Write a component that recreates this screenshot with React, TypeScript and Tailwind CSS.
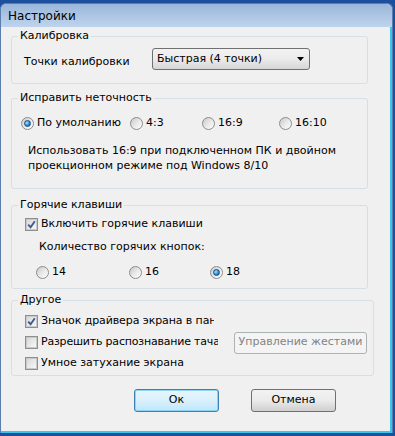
import React from 'react'

function Radio({ checked }: { checked?: boolean }) {
  return (
    <span className="flex h-[13px] w-[13px] shrink-0 items-center justify-center rounded-full border border-[#8c8c8c] bg-gradient-to-br from-[#c9c9c9] via-[#e8e8e8] to-[#ffffff]">
      {checked && (
        <span className="h-[7px] w-[7px] rounded-full border border-[#1b4f7e] bg-[radial-gradient(circle_at_35%_35%,#a6e3ff,#2a8fd6_55%,#0f4a85)]" />
      )}
    </span>
  )
}

function Check({ checked }: { checked?: boolean }) {
  return (
    <span className="flex h-[13px] w-[13px] shrink-0 items-center justify-center border border-[#8e8f8f] bg-white">
      <span className="flex h-[11px] w-[11px] items-center justify-center border border-[#c8c8c8] bg-gradient-to-br from-[#d9d9d9] to-[#f7f7f7]">
        {checked && (
          <svg width="9" height="9" viewBox="0 0 9 9">
            <path d="M1.2 4.6 L3.6 7.2 L7.8 1.3" fill="none" stroke="#3f5a91" strokeWidth="1.9" />
          </svg>
        )}
      </span>
    </span>
  )
}

function Group({ title, h, className, children }: { title: string; h: string; className?: string; children: React.ReactNode }) {
  return (
    <fieldset className={`ml-[10px] w-[357px] rounded-[3px] border border-[#d5dfe5] px-[6px] ${h} ${className ?? ''}`}>
      <legend className="px-[2px] leading-[14px]">{title}</legend>
      {children}
    </fieldset>
  )
}

const btn = 'flex h-[23px] w-[85px] items-center justify-center rounded-[3px] border'

export default function App() {
  return (
    <div className="h-[436px] w-[395px] overflow-hidden bg-[#1c4f9e] pt-[3px] font-['DejaVu_Sans',sans-serif] text-[11px] text-black">
      <div className="flex h-[430px] w-[393px] flex-col rounded-t-[6px] border-l border-r border-t border-[#5a7fae] bg-[#b5cbe6]">
        <div className="flex h-[23px] items-center rounded-t-[6px] bg-gradient-to-b from-[#9ab6db] to-[#bfd4ec] pl-[7px] text-[12px]">
          Настройки
        </div>
        <div className="flex-1 border-b-2 border-r-2 border-[#39c6ee] bg-[#f0f0f0] pt-[2px]">
          <Group title="Калибровка" h="h-[55px]">
            <div className="mt-[5px] flex items-start">
              <div className="ml-[6px] mt-[7px] w-[128px] leading-[14px]">Точки калибровки</div>
              <div className="flex h-[22px] w-[158px] items-center justify-between rounded-[3px] border border-[#707070] bg-gradient-to-b from-[#f2f2f2] via-[#ebebeb] to-[#d6d6d6] pl-[4px] pr-[5px]">
                <span>Быстрая (4 точки)</span>
                <svg width="7" height="4" viewBox="0 0 7 4">
                  <path d="M0 0 H7 L3.5 4 Z" fill="#000" />
                </svg>
              </div>
            </div>
          </Group>

          <Group title="Исправить неточность" h="h-[98px]" className="mt-[7px]">
            <div className="ml-[3px] mt-[12px] flex h-[13px] items-center">
              <div className="flex w-[109px] items-center gap-[3px]"><Radio checked /><span>По умолчанию</span></div>
              <div className="flex w-[72px] items-center gap-[3px]"><Radio /><span>4:3</span></div>
              <div className="flex w-[77px] items-center gap-[3px]"><Radio /><span>16:9</span></div>
              <div className="flex items-center gap-[3px]"><Radio /><span>16:10</span></div>
            </div>
            <p className="ml-[10px] mt-[13px] w-[320px] leading-[15px]">
              Использовать 16:9 при подключенном ПК и двойном проекционном режиме под Windows 8/10
            </p>
          </Group>

          <Group title="Горячие клавиши" h="h-[91px]" className="mt-[9px]">
            <div className="ml-[7px] mt-[6px] flex h-[13px] items-center gap-[3px]">
              <Check checked />
              <span>Включить горячие клавиши</span>
            </div>
            <div className="ml-[21px] mt-[9px] leading-[14px]">Количество горячих кнопок:</div>
            <div className="ml-[18px] mt-[12px] flex h-[13px] items-center">
              <div className="flex w-[93px] items-center gap-[3px]"><Radio /><span>14</span></div>
              <div className="flex w-[81px] items-center gap-[3px]"><Radio /><span>16</span></div>
              <div className="flex items-center gap-[3px]"><Radio checked /><span>18</span></div>
            </div>
          </Group>

          <Group title="Другое" h="h-[83px]" className="mt-[4px]">
            <div className="ml-[7px] mt-[4px] flex h-[21px] items-center gap-[3px]">
              <Check checked />
              <span className="w-[173px] overflow-hidden whitespace-nowrap tracking-[-0.1px]">Значок драйвера экрана в панели задач</span>
            </div>
            <div className="ml-[7px] flex h-[21px] items-center">
              <Check />
              <span className="ml-[3px] w-[177px] overflow-hidden whitespace-nowrap tracking-[-0.2px]">Разрешить распознавание тача</span>
              <div className="ml-[16px] flex h-[22px] w-[133px] items-center justify-center rounded-[3px] border border-[#adb2b5] bg-[#f4f4f4] text-[#838383]">
                Управление жестами
              </div>
            </div>
            <div className="ml-[7px] flex h-[21px] items-center gap-[3px]">
              <Check />
              <span>Умное затухание экрана</span>
            </div>
          </Group>

          <div className="ml-[133px] mt-[13px] flex gap-[32px]">
            <div className={`${btn} border-[#3c7fb1] bg-gradient-to-b from-[#eaf6fd] via-[#d9f0fc] to-[#bee6fd] shadow-[inset_0_0_0_1px_#8fd3f5]`}>Ок</div>
            <div className={`${btn} border-[#707070] bg-gradient-to-b from-[#f2f2f2] via-[#ebebeb] to-[#cfcfcf]`}>Отмена</div>
          </div>
        </div>
      </div>
    </div>
  )
}
